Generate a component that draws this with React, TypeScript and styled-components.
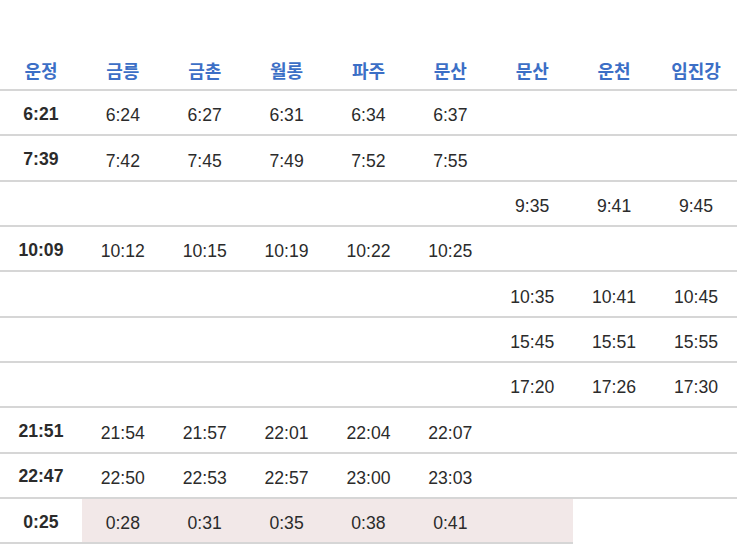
import React from "react";
import styled, { createGlobalStyle } from "styled-components";

const Global = createGlobalStyle`
  html, body {
    margin: 0;
    padding: 0;
    background: #ffffff;
  }
  body {
    font-family: "Liberation Sans", Arial, "Noto Sans CJK KR", sans-serif;
  }
`;

const Page = styled.div`
  padding-top: 49px;
  width: 745px;
`;

const Table = styled.table`
  width: 737px;
  border-collapse: separate;
  border-spacing: 0;
  table-layout: fixed;
  font-family: "Liberation Sans", Arial, "Noto Sans CJK KR", sans-serif;
`;

const HeadRow = styled.tr`
  height: 42px;
`;

const Row = styled.tr`
  height: 45.35px;
`;

const HeadCell = styled.th`
  padding: 1px 0 0 0;
  border-bottom: 2px solid #d6d6d6;
  color: #3c6fc6;
  font-family: "Noto Sans CJK KR", "Liberation Sans", sans-serif;
  font-size: 18px;
  font-weight: 700;
  text-align: center;
  vertical-align: middle;
  line-height: 22px;
`;

const Cell = styled.td<{ $lead?: boolean; $hl?: boolean }>`
  padding: ${(p) => (p.$lead ? "2px 0 0 0" : "5px 0 0 0")};
  border-bottom: 2px solid #d6d6d6;
  background: ${(p) => (p.$hl ? "#f2e8e8" : "transparent")};
  color: #2b2b2b;
  font-size: 17.6px;
  font-weight: ${(p) => (p.$lead ? 700 : 400)};
  text-align: center;
  vertical-align: middle;
  line-height: 20px;
`;

const stations = ["운정", "금릉", "금촌", "월롱", "파주", "문산", "문산", "운천", "임진강"];

type RowData = { times: (string | null)[]; hl?: boolean };

const rows: RowData[] = [
  { times: ["6:21", "6:24", "6:27", "6:31", "6:34", "6:37", null, null, null] },
  { times: ["7:39", "7:42", "7:45", "7:49", "7:52", "7:55", null, null, null] },
  { times: [null, null, null, null, null, null, "9:35", "9:41", "9:45"] },
  { times: ["10:09", "10:12", "10:15", "10:19", "10:22", "10:25", null, null, null] },
  { times: [null, null, null, null, null, null, "10:35", "10:41", "10:45"] },
  { times: [null, null, null, null, null, null, "15:45", "15:51", "15:55"] },
  { times: [null, null, null, null, null, null, "17:20", "17:26", "17:30"] },
  { times: ["21:51", "21:54", "21:57", "22:01", "22:04", "22:07", null, null, null] },
  { times: ["22:47", "22:50", "22:53", "22:57", "23:00", "23:03", null, null, null] },
  { times: ["0:25", "0:28", "0:31", "0:35", "0:38", "0:41", null], hl: true },
];

export default function App() {
  return (
    <Page>
      <Global />
      <Table>
        <thead>
          <HeadRow>
            {stations.map((s, i) => (
              <HeadCell key={i}>{s}</HeadCell>
            ))}
          </HeadRow>
        </thead>
        <tbody>
          {rows.map((r, ri) => (
            <Row key={ri}>
              {r.times.map((t, ci) => (
                <Cell key={ci} $lead={ci === 0} $hl={r.hl && ci > 0}>
                  {t ?? ""}
                </Cell>
              ))}
            </Row>
          ))}
        </tbody>
      </Table>
    </Page>
  );
}
